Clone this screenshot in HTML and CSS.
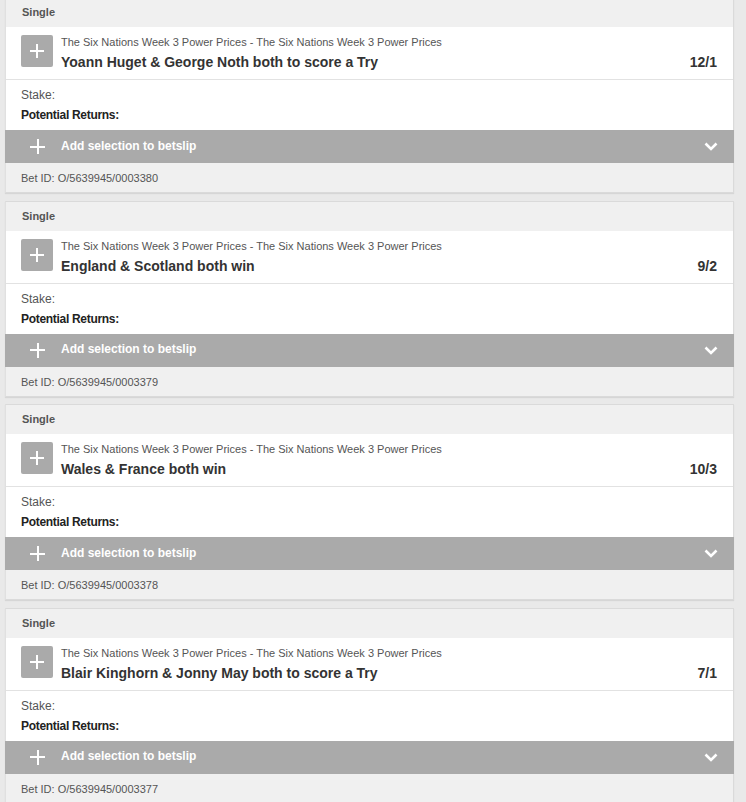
FILE: index.html
```html
<!DOCTYPE html>
<html>
<head>
<meta charset="utf-8">
<link rel="stylesheet" href="styles.css">
</head>
<body>
<div class="list">
  <div class="card">
    <div class="card-head">Single</div>
    <div class="sel">
      <div class="box"><span class="plus"></span></div>
      <div class="info">
        <div class="market">The Six Nations Week 3 Power Prices - The Six Nations Week 3 Power Prices</div>
        <div class="row"><span class="name">Yoann Huget &amp; George Noth both to score a Try</span><span class="odds">12/1</span></div>
      </div>
    </div>
    <div class="stake">
      <div class="stake-label">Stake:</div>
      <div class="returns">Potential Returns:</div>
    </div>
    <div class="bar">
      <span class="bar-plus"></span>
      <span class="bar-text">Add selection to betslip</span>
      <svg class="chev" width="14" height="9" viewBox="0 0 14 9"><path d="M1.5 1.5 L7 7 L12.5 1.5" fill="none" stroke="#fff" stroke-width="2.6"/></svg>
    </div>
    <div class="foot">Bet ID: O/5639945/0003380</div>
  </div>

  <div class="card">
    <div class="card-head">Single</div>
    <div class="sel">
      <div class="box"><span class="plus"></span></div>
      <div class="info">
        <div class="market">The Six Nations Week 3 Power Prices - The Six Nations Week 3 Power Prices</div>
        <div class="row"><span class="name">England &amp; Scotland both win</span><span class="odds">9/2</span></div>
      </div>
    </div>
    <div class="stake">
      <div class="stake-label">Stake:</div>
      <div class="returns">Potential Returns:</div>
    </div>
    <div class="bar">
      <span class="bar-plus"></span>
      <span class="bar-text">Add selection to betslip</span>
      <svg class="chev" width="14" height="9" viewBox="0 0 14 9"><path d="M1.5 1.5 L7 7 L12.5 1.5" fill="none" stroke="#fff" stroke-width="2.6"/></svg>
    </div>
    <div class="foot">Bet ID: O/5639945/0003379</div>
  </div>

  <div class="card">
    <div class="card-head">Single</div>
    <div class="sel">
      <div class="box"><span class="plus"></span></div>
      <div class="info">
        <div class="market">The Six Nations Week 3 Power Prices - The Six Nations Week 3 Power Prices</div>
        <div class="row"><span class="name">Wales &amp; France both win</span><span class="odds">10/3</span></div>
      </div>
    </div>
    <div class="stake">
      <div class="stake-label">Stake:</div>
      <div class="returns">Potential Returns:</div>
    </div>
    <div class="bar">
      <span class="bar-plus"></span>
      <span class="bar-text">Add selection to betslip</span>
      <svg class="chev" width="14" height="9" viewBox="0 0 14 9"><path d="M1.5 1.5 L7 7 L12.5 1.5" fill="none" stroke="#fff" stroke-width="2.6"/></svg>
    </div>
    <div class="foot">Bet ID: O/5639945/0003378</div>
  </div>

  <div class="card">
    <div class="card-head">Single</div>
    <div class="sel">
      <div class="box"><span class="plus"></span></div>
      <div class="info">
        <div class="market">The Six Nations Week 3 Power Prices - The Six Nations Week 3 Power Prices</div>
        <div class="row"><span class="name">Blair Kinghorn &amp; Jonny May both to score a Try</span><span class="odds">7/1</span></div>
      </div>
    </div>
    <div class="stake">
      <div class="stake-label">Stake:</div>
      <div class="returns">Potential Returns:</div>
    </div>
    <div class="bar">
      <span class="bar-plus"></span>
      <span class="bar-text">Add selection to betslip</span>
      <svg class="chev" width="14" height="9" viewBox="0 0 14 9"><path d="M1.5 1.5 L7 7 L12.5 1.5" fill="none" stroke="#fff" stroke-width="2.6"/></svg>
    </div>
    <div class="foot">Bet ID: O/5639945/0003377</div>
  </div>
</div>
</body>
</html>
```
FILE: styles.css
```css
html, body {
  margin: 0;
  padding: 0;
  background: #e9e9e9;
  font-family: "Liberation Sans", Arial, sans-serif;
  overflow: hidden;
}
.list {
  display: flex;
  flex-direction: column;
  gap: 7.5px;
  width: 729px;
  margin: -3px 0 0 5px;
}
.card {
  background: #fff;
  border: 1px solid #dadada;
  border-left-color: #e0e0e0;
  box-shadow: 0 1px 1px rgba(0,0,0,0.08);
}
.card-head {
  height: 29px;
  line-height: 29px;
  background: #f0f0f0;
  padding-left: 16px;
  font-size: 11px;
  font-weight: bold;
  color: #555;
}
.sel {
  display: flex;
  gap: 8px;
  padding: 8px 16px 8px 15px;
  height: 36px;
  border-bottom: 1px solid #e2e2e2;
}
.box {
  width: 32px;
  height: 32px;
  background: #aaa;
  border-radius: 2px;
  position: relative;
  flex: none;
}
.plus, .bar-plus {
  position: relative;
  display: block;
}
.plus {
  position: absolute;
  left: 9px;
  top: 9px;
  width: 14px;
  height: 14px;
}
.plus::before, .plus::after, .bar-plus::before, .bar-plus::after {
  content: "";
  position: absolute;
  background: #fff;
}
.plus::before { left: 0; top: 6px; width: 14px; height: 2px; }
.plus::after { left: 6px; top: 0; width: 2px; height: 14px; }
.info {
  flex: 1;
  min-width: 0;
}
.market {
  font-size: 11px;
  line-height: 14px;
  color: #555;
}
.row {
  display: flex;
  justify-content: space-between;
  margin-top: 4px;
  line-height: 18px;
  font-size: 14px;
  font-weight: bold;
  color: #333;
}
.stake {
  display: flex;
  flex-direction: column;
  gap: 4px;
  padding: 7px 16px 7px 15px;
  font-size: 12px;
  line-height: 16px;
  height: 36px;
}
.stake-label { color: #555; }
.returns { color: #222; font-weight: bold; letter-spacing: -0.3px; }
.bar {
  display: flex;
  align-items: center;
  height: 33px;
  background: #aaa;
  margin: 0 -1px;
  padding: 0 16px 0 25px;
}
.bar-plus {
  width: 15px;
  height: 15px;
  flex: none;
}
.bar-plus::before { left: 0; top: 6.5px; width: 15px; height: 2px; }
.bar-plus::after { left: 6.5px; top: 0; width: 2px; height: 15px; }
.bar-text {
  flex: 1;
  margin-left: 16px;
  margin-bottom: 2px;
  color: #fff;
  font-size: 12px;
  font-weight: bold;
}
.chev {
  display: block;
}
.foot {
  height: 28px;
  padding-top: 1px;
  line-height: 29px;
  background: #f0f0f0;
  padding-left: 15px;
  font-size: 11px;
  color: #555;
}
```
